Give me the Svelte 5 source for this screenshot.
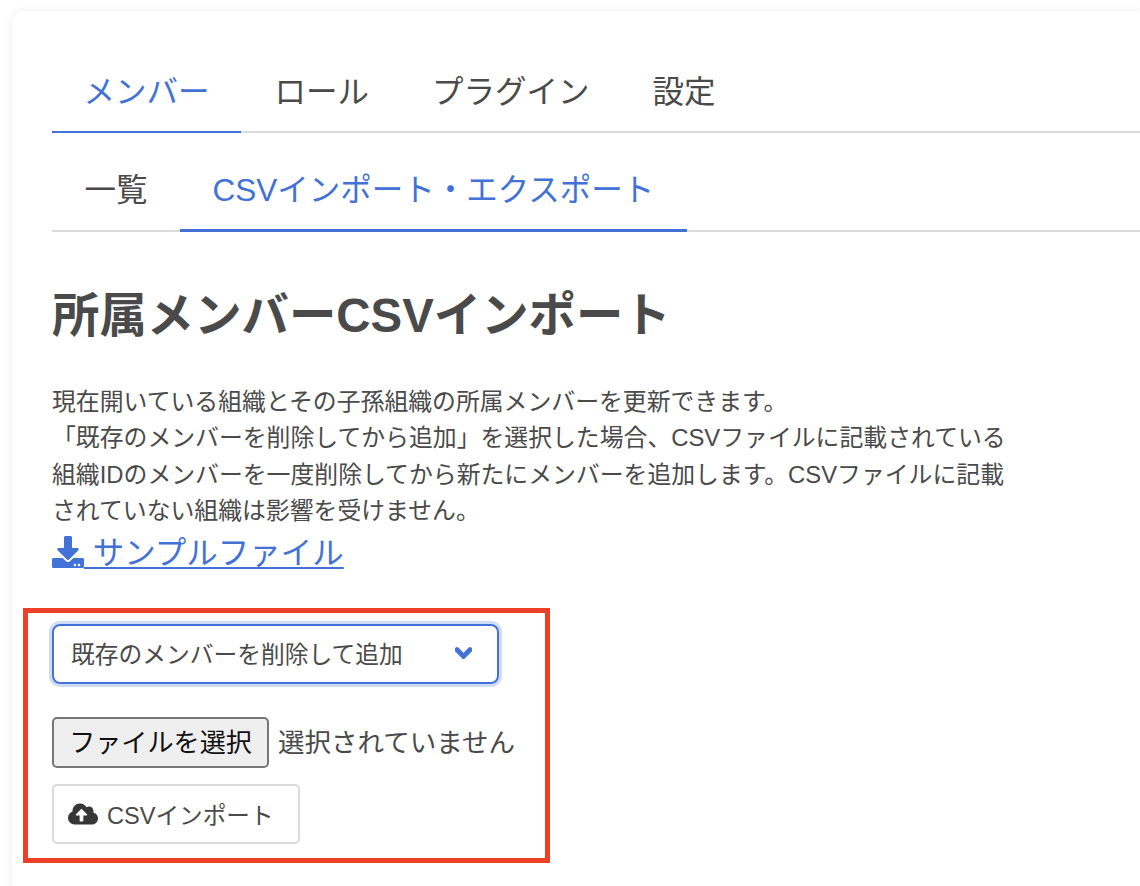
<script>
  const mainTabs = ['メンバー', 'ロール', 'プラグイン', '設定']
  const subTabs = ['一覧', 'CSVインポート・エクスポート']
  let mainActive = 0
  let subActive = 1
</script>

<div class="page">
  <section class="card">
    <ul class="tabs main">
      {#each mainTabs as tab, i}
        <li class:active={i === mainActive}>{tab}</li>
      {/each}
    </ul>
    <ul class="tabs sub">
      {#each subTabs as tab, i}
        <li class:active={i === subActive}>{tab}</li>
      {/each}
    </ul>

    <h1>所属メンバーCSVインポート</h1>

    <p class="desc">
      現在開いている組織とその子孫組織の所属メンバーを更新できます。<br />
      「既存のメンバーを削除してから追加」を選択した場合、CSVファイルに記載されている<br />
      組織IDのメンバーを一度削除してから新たにメンバーを追加します。CSVファイルに記載<br />
      されていない組織は影響を受けません。
    </p>

    <a class="sample" href="#sample">
      <svg class="dl" viewBox="0 0 512 512"><path fill="currentColor" d="M216 0h80c13.3 0 24 10.7 24 24v168h87.7c17.8 0 26.7 21.5 14.1 34.1L269.7 378.3c-7.5 7.5-19.8 7.5-27.3 0L90.1 226.1c-12.6-12.6-3.7-34.1 14.1-34.1H192V24c0-13.3 10.7-24 24-24zm296 376v112c0 13.3-10.7 24-24 24H24c-13.3 0-24-10.7-24-24V376c0-13.3 10.7-24 24-24h146.7l49 49c20.1 20.1 52.5 20.1 72.6 0l49-49H488c13.3 0 24 10.7 24 24zm-124 88c0-11-9-20-20-20s-20 9-20 20 9 20 20 20 20-9 20-20zm64 0c0-11-9-20-20-20s-20 9-20 20 9 20 20 20 20-9 20-20z" /></svg>
      サンプルファイル
    </a>

    <div class="import-box">
      <div class="select">
        <span>既存のメンバーを削除して追加</span>
        <svg class="chev" viewBox="0 0 448 512"><path fill="currentColor" stroke="currentColor" stroke-width="50" stroke-linejoin="round" d="M207.029 381.476L12.686 187.132c-9.373-9.373-9.373-24.569 0-33.941l22.667-22.667c9.357-9.357 24.522-9.375 33.901-.04L224 284.505l154.745-154.021c9.379-9.335 24.544-9.317 33.901.04l22.667 22.667c9.373 9.373 9.373 24.569 0 33.941L240.971 381.476c-9.373 9.372-24.569 9.372-33.942 0z" /></svg>
      </div>

      <div class="file-row">
        <button class="file-btn" type="button">ファイルを選択</button>
        <span class="file-name">選択されていません</span>
      </div>

      <button class="import-btn" type="button">
        <svg class="cloud" viewBox="0 0 640 512"><path fill="currentColor" d="M537.6 226.6c4.1-10.7 6.4-22.4 6.4-34.6 0-53-43-96-96-96-19.7 0-38.1 6-53.3 16.2C367 64.2 315.3 32 256 32c-88.4 0-160 71.6-160 160 0 2.7.1 5.4.2 8.1C40.2 219.8 0 273.2 0 336c0 79.5 64.5 144 144 144h368c70.7 0 128-57.3 128-128 0-61.9-44-113.6-102.4-125.4zM393.4 288H328v112c0 8.8-7.2 16-16 16h-48c-8.8 0-16-7.2-16-16V288h-65.4c-14.3 0-21.4-17.2-11.3-27.3l105.4-105.4c6.2-6.2 16.4-6.2 22.6 0l105.4 105.4c10.1 10.1 2.9 27.3-11.3 27.3z" /></svg>
        CSVインポート
      </button>
    </div>
  </section>
</div>

<style>
  :global(body) {
    margin: 0;
    background: #fff;
    font-family: "Liberation Sans", "Noto Sans CJK JP", sans-serif;
    color: #4a4a4a;
  }
  .page { height: 886px; overflow: hidden; padding: 11px 0 0 12px; box-sizing: border-box; }
  .card {
    background: #fff;
    border-radius: 12px 0 0 12px;
    box-shadow: 0 0 8px rgba(0, 0, 0, 0.08);
    padding: 40px 0 0 40px;
    height: 900px;
    box-sizing: border-box;
  }
  .tabs { display: flex; list-style: none; margin: 0; padding: 0; font-size: 31.5px; }
  .main { border-bottom: 2px solid #dbdbdb; }
  .main li { padding: 20px 31.5px 18px; margin-bottom: -2px; border-bottom: 2px solid transparent; line-height: 42px; }
  .main li:nth-child(2) { margin-left: 2px; }
  .sub { border-bottom: 2px solid #dbdbdb; margin-top: 18px; }
  .sub li { padding: 18px 32.5px 18px; margin-bottom: -2px; border-bottom: 3px solid transparent; line-height: 42px; }
  .tabs li.active { color: #4272d7; border-bottom-color: #4272d7; }

  h1 { font-size: 47.4px; line-height: 60px; font-weight: 700; margin: 54px 0 0; color: #4a4a4a; }

  .desc { font-size: 23.85px; line-height: 36.4px; margin: 38px 0 0; }

  .sample {
    display: block;
    width: max-content;
    margin-top: 1px;
    color: #4272d7;
    font-size: 31.5px;
    line-height: 44px;
    text-decoration: underline;
    text-underline-offset: 3px;
    text-decoration-thickness: 2px;
  }
  .dl { width: 32px; height: 32px; vertical-align: -4px; }

  .import-box {
    width: 527px;
    height: 255px;
    box-sizing: border-box;
    margin: 33px 0 0 -29px;
    border: 5px solid #ee4026;
    padding: 11px 24px;
    display: flex;
    flex-direction: column;
    align-items: flex-start;
  }
  .select {
    width: 447px;
    height: 60px;
    box-sizing: border-box;
    border: 2px solid #4272d7;
    border-radius: 8px;
    box-shadow: 0 0 0 3px rgba(66, 114, 215, 0.25);
    display: flex;
    align-items: center;
    justify-content: space-between;
    padding: 0 25px 2px 17px;
    font-size: 23.75px;
  }
  .chev { width: 17px; height: 20px; color: #4272d7; }

  .file-row { display: flex; align-items: center; gap: 9px; margin-top: 33px; }
  .file-btn {
    width: 217px;
    height: 51px;
    box-sizing: border-box;
    padding: 0 0 3px;
    border: 2px solid #767676;
    border-radius: 5px;
    background: #efefef;
    color: #111;
    font: inherit;
    font-size: 26.1px;
  }
  .file-name { font-size: 26.5px; padding-bottom: 3px; }

  .import-btn {
    margin-top: 16px;
    width: 248px;
    height: 60px;
    box-sizing: border-box;
    border: 2px solid #dbdbdb;
    border-radius: 5px;
    background: #fff;
    color: #4a4a4a;
    font: inherit;
    font-size: 23.6px;
    display: flex;
    align-items: center;
    gap: 9px;
    padding: 0 0 0 14px;
  }
  .cloud { width: 30px; height: 24px; color: #363636; }
</style>
